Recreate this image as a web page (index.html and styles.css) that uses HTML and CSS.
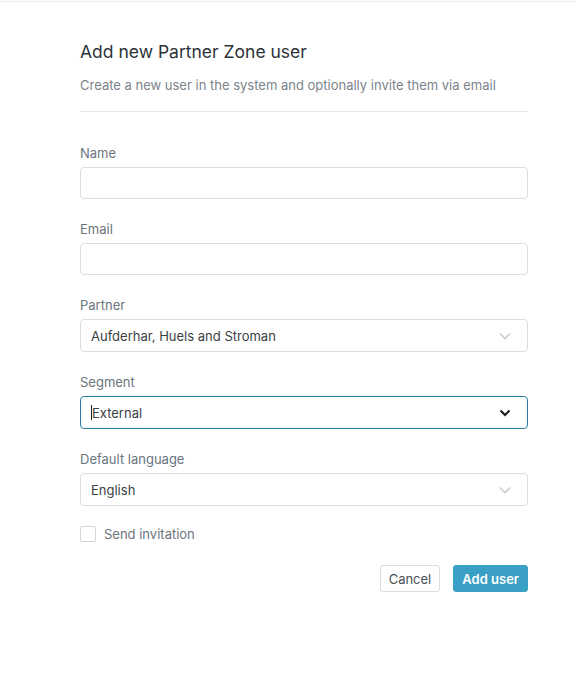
FILE: index.html
```html
<!DOCTYPE html>
<html lang="en">
<head>
    <meta charset="UTF-8">
    <meta name="viewport" content="width=device-width, initial-scale=1.0">
    <title>Add new Partner Zone user</title>
    <link rel="stylesheet" href="styles.css">
</head>
<body>
    <div class="topline"></div>
    <div class="modal">
        <h1>Add new Partner Zone user</h1>
        <p class="subtitle">Create a new user in the system and optionally invite them via email</p>

        <form class="user-form">
            <div class="field">
                <label for="name">Name</label>
                <input type="text" id="name" class="input">
            </div>
            <div class="field">
                <label for="email">Email</label>
                <input type="email" id="email" class="input">
            </div>
            <div class="field">
                <label>Partner</label>
                <div class="select">
                    <span class="select-value">Aufderhar, Huels and Stroman</span>
                    <svg class="chevron" width="12" height="8" viewBox="0 0 12 8"><path d="M1 1.5l5 5 5-5" fill="none" stroke="currentColor" stroke-width="1.6"/></svg>
                </div>
            </div>
            <div class="field">
                <label>Segment</label>
                <div class="select select-focused">
                    <span class="select-value"><span class="caret"></span>External</span>
                    <svg class="chevron" width="12" height="8" viewBox="0 0 12 8"><path d="M1.5 1.5l4.5 4.5 4.5-4.5" fill="none" stroke="currentColor" stroke-width="2.2"/></svg>
                </div>
            </div>
            <div class="field">
                <label>Default language</label>
                <div class="select">
                    <span class="select-value">English</span>
                    <svg class="chevron" width="12" height="8" viewBox="0 0 12 8"><path d="M1 1.5l5 5 5-5" fill="none" stroke="currentColor" stroke-width="1.6"/></svg>
                </div>
            </div>

            <label class="checkbox-row">
                <span class="checkbox"></span>
                <span>Send invitation</span>
            </label>

            <div class="actions">
                <button type="button" class="btn btn-default">Cancel</button>
                <button type="submit" class="btn btn-primary">Add user</button>
            </div>
        </form>
    </div>
</body>
</html>
```

FILE: styles.css
```css
body {
    font-family: Inter, "Noto Sans", sans-serif;
    background-color: #fff;
    color: #333;
    margin: 0;
    padding-top: 1px;
}
.topline {
    height: 1px;
    background: #ececec;
}
.modal {
    width: 448px;
    margin-left: 80px;
    padding-top: 38px;
}
h1 {
    font-size: 17.5px;
    line-height: 24px;
    font-weight: 400;
    color: #2c3339;
    margin: 0;
}
.subtitle {
    font-size: 13px;
    line-height: 20px;
    color: #7b848c;
    margin: 11px 0 0;
    padding-bottom: 16px;
    border-bottom: 1px solid #e7e7e7;
}
.user-form {
    padding-top: 31px;
}
.field {
    margin-bottom: 20px;
}
.field label {
    display: block;
    font-size: 13px;
    line-height: 20px;
    color: #6b757e;
    margin-bottom: 4px;
}
.input {
    display: block;
    box-sizing: border-box;
    width: 100%;
    height: 32px;
    border: 1px solid #dcdddf;
    border-radius: 4px;
    padding: 0 10px;
    font: inherit;
    font-size: 13px;
    outline: none;
}
.select {
    box-sizing: border-box;
    height: 33px;
    border: 1px solid #dcdddf;
    border-radius: 4px;
    display: flex;
    align-items: center;
    justify-content: space-between;
    padding: 0 16px 0 10px;
    font-size: 13px;
    color: #3a3f44;
}
.select .chevron {
    color: #cbcdcf;
}
.select-focused {
    border-color: #2a7da5;
}
.select-focused .chevron {
    color: #1f2326;
}
.select-value {
    display: flex;
    align-items: center;
}
.caret {
    width: 1px;
    height: 15px;
    background: #222;
}
.checkbox-row {
    display: flex;
    align-items: center;
    gap: 8px;
    margin-top: 3px;
    font-size: 13px;
    line-height: 16px;
    color: #6b757e;
}
.checkbox {
    box-sizing: border-box;
    width: 16px;
    height: 16px;
    border: 1px solid #d3d5d7;
    border-radius: 2px;
}
.actions {
    display: flex;
    justify-content: flex-end;
    gap: 13px;
    margin-top: 23px;
}
.btn {
    height: 27px;
    padding: 0 8px;
    border-radius: 3px;
    font-family: inherit;
    font-size: 13px;
    cursor: pointer;
}
.btn-default {
    background: #fff;
    border: 1px solid #dcdddf;
    color: #4a5056;
}
.btn-primary {
    background: #3a9fc5;
    border: 1px solid #3a9fc5;
    color: #fff;
    font-weight: 600;
}
```
